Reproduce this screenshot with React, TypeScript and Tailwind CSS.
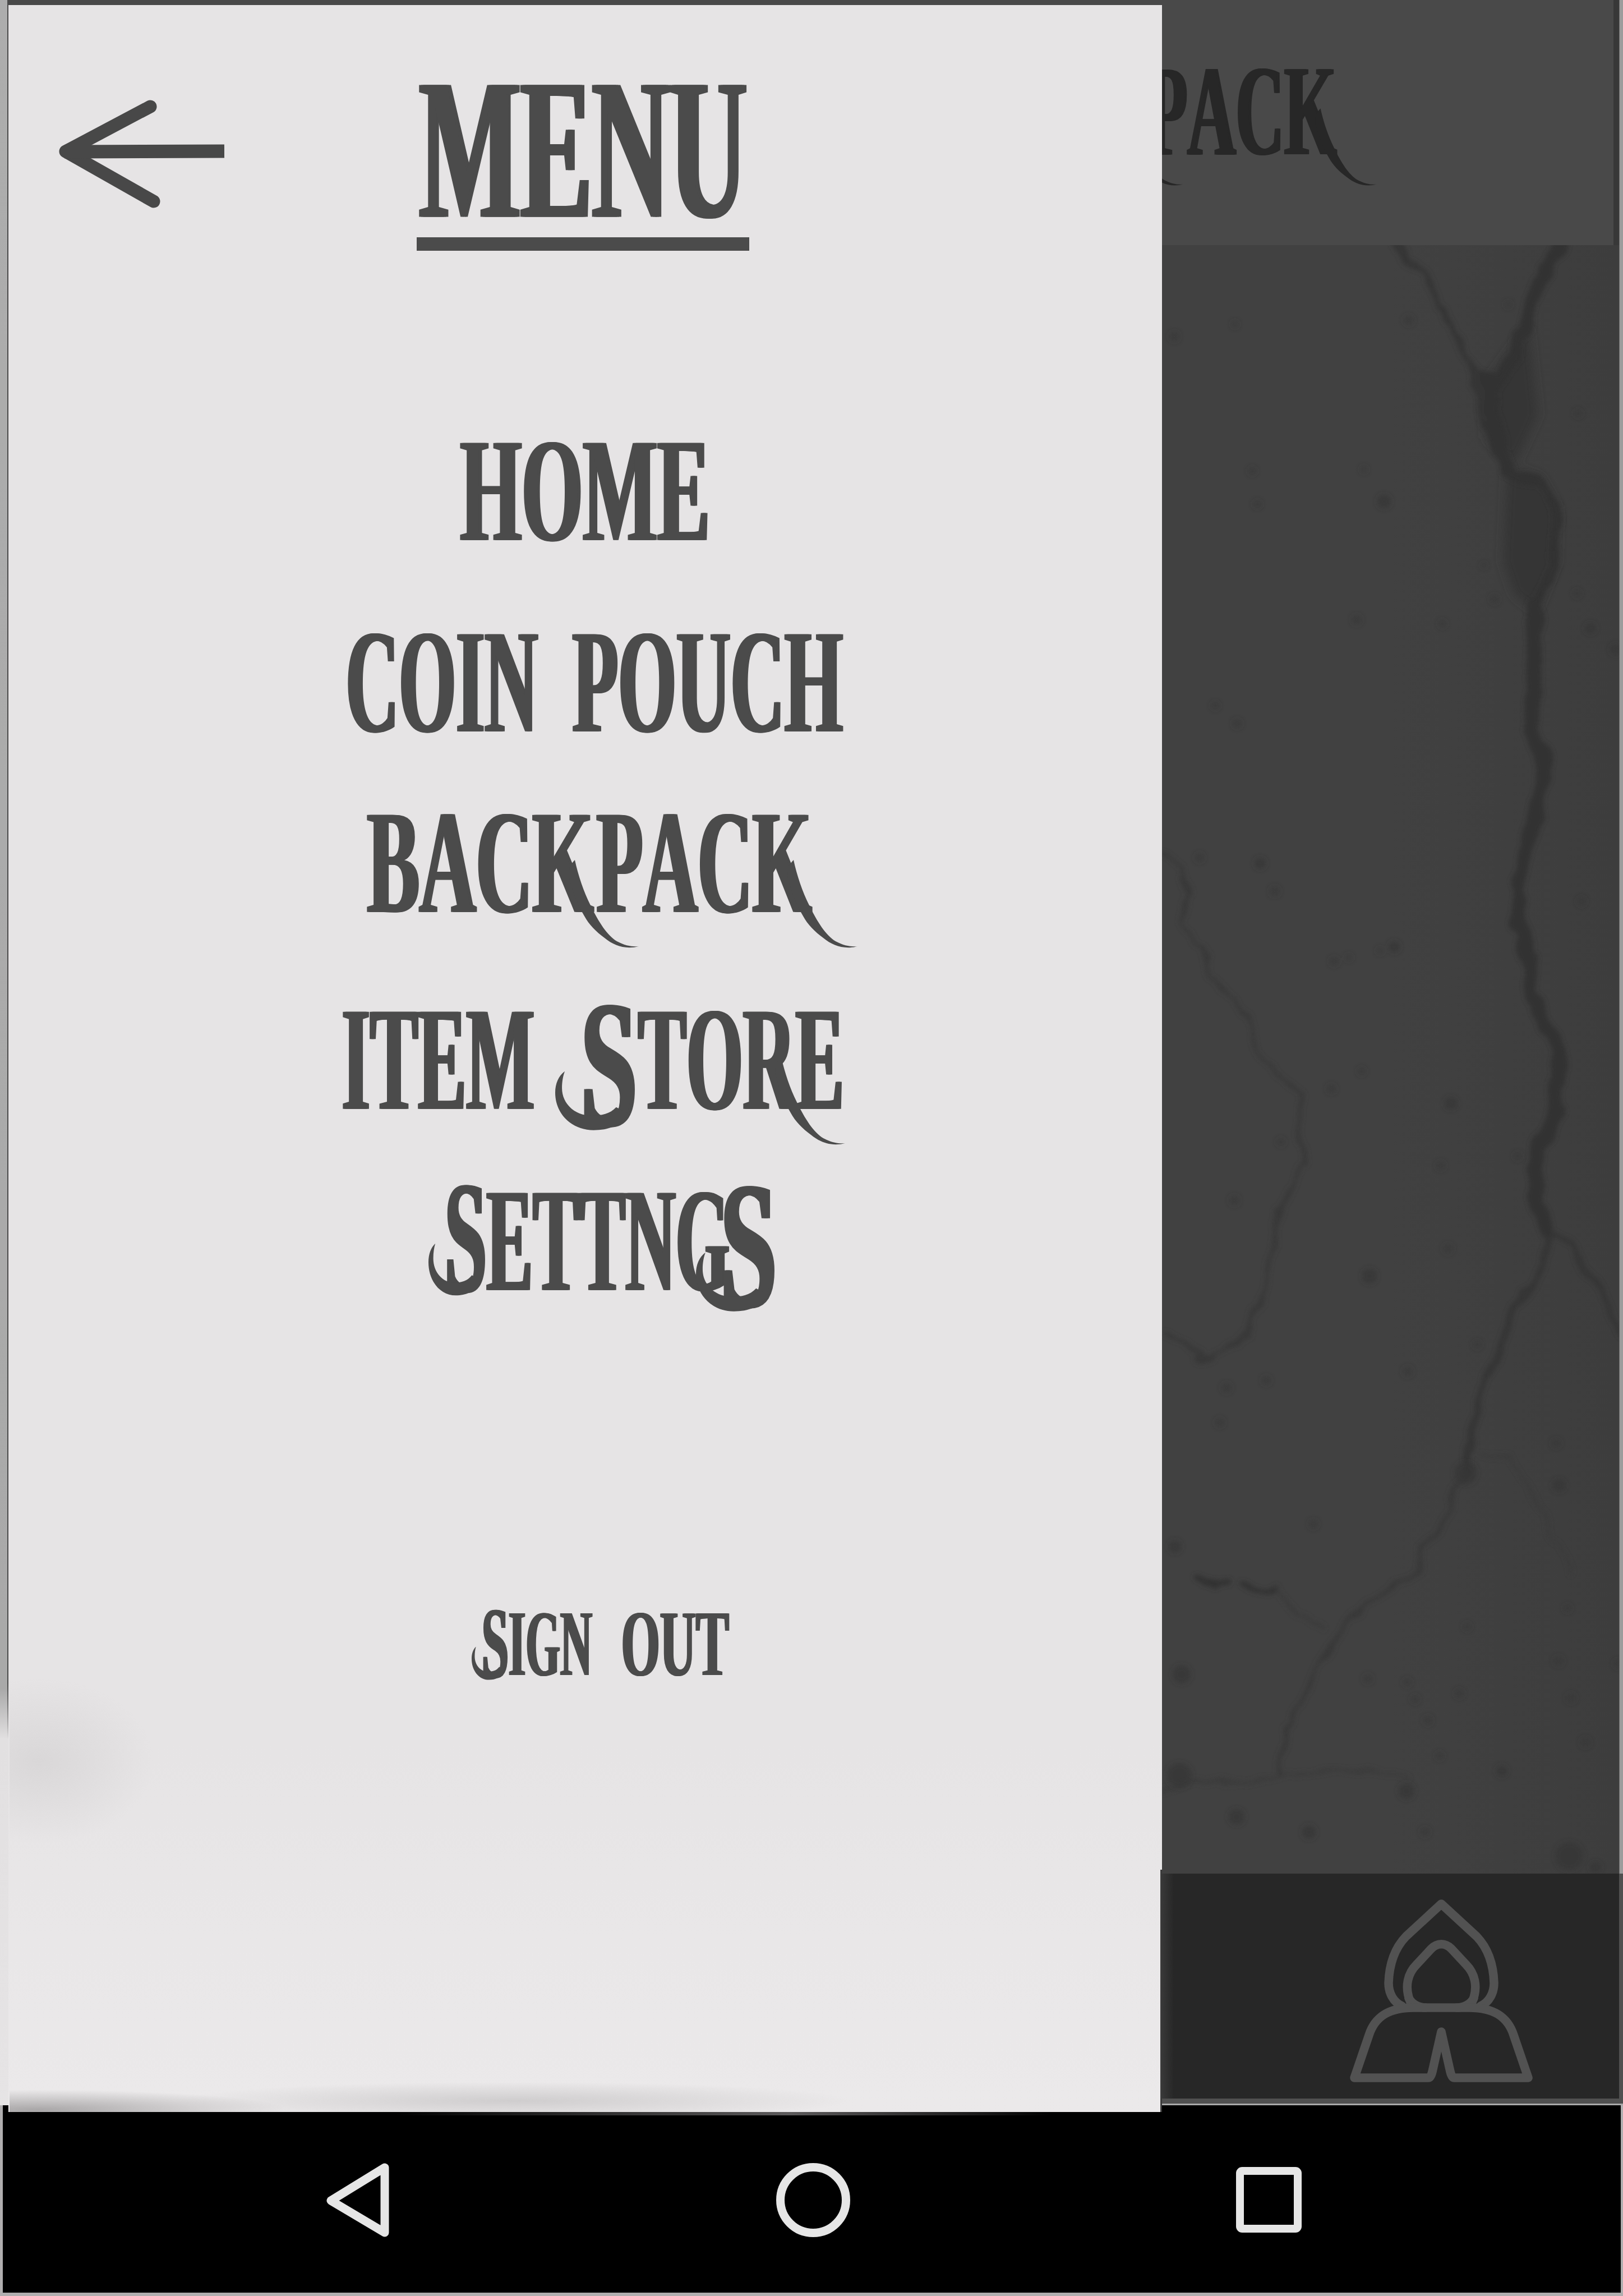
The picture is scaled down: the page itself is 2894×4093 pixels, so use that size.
import React from 'react';

// Advance widths of the bold serif capitals, in em.
const ADVANCE: Record<string, number> = {
  A: 0.722, B: 0.667, C: 0.722, E: 0.667, G: 0.778, H: 0.778, I: 0.389, K: 0.778, M: 0.944,
  N: 0.722, O: 0.778, P: 0.611, R: 0.722, S: 0.556, T: 0.667, U: 0.722,
};

const CAP = 0.655;

type Part = {
  text: string;
  width: number;
  cap: number;
  before?: number;
  drop?: number;
  // x offsets of the sweeping tails below K and R
  tails?: number[];
  // width of the crescent that curls out to the left of the part
  curl?: number;
};

function Tail({ x, cap }: { x: number; cap: number }) {
  const k = cap / 173;
  return (
    <svg
      className="absolute top-0 overflow-visible"
      style={{ left: x, width: 100 * k, height: 240 * k }}
      viewBox="0 0 100 240"
      fill="currentColor"
    >
      <path d="M-30 80C-24 108-14 137-2 161C12 190 28 215 45 225C60 233 72 235 84 234C60 240 40 233 23 219C8 208-5 195-13 180C-26 158-34 136-40 112C-43 98-38 88-30 80Z" />
    </svg>
  );
}

function Curl({ width, height, drop }: { width: number; height: number; drop: number }) {
  return (
    <svg
      className="absolute right-0 overflow-visible"
      style={{ width, height, top: drop }}
      viewBox="0 0 145 225"
      preserveAspectRatio="none"
      fill="currentColor"
    >
      <path d="M17 120C6 128 0 142 0 158C0 195 28 225 68 225C94 225 116 217 130 196L108 184C97 196 82 199 64 199C35 199 12 178 12 150C12 138 14 128 17 120Z" />
    </svg>
  );
}

function Lettering({ parts, className }: { parts: Part[]; className: string }) {
  return (
    <div className={'flex items-start whitespace-nowrap ' + className}>
      {parts.map((p, i) => {
        const size = p.cap / CAP;
        const natural = p.text.split('').reduce((sum, c) => sum + (ADVANCE[c] ?? 0.25), 0) * size;
        return (
          <span
            key={i}
            className="relative block shrink-0"
            style={{ width: p.width, height: p.cap, marginLeft: p.before ?? 0 }}
          >
            <span
              className="block w-max origin-top-left leading-none [font-kerning:none] [text-shadow:0.02em_0_currentColor,0.04em_0_currentColor]"
              style={{
                fontSize: size,
                transform: `translateY(${-0.1825 * size + (p.drop ?? 0)}px) scaleX(${p.width / (natural + 0.02 * size)})`,
              }}
            >
              {p.text}
            </span>
            {p.tails?.map((x) => <Tail key={x} x={x} cap={p.cap} />)}
            {p.curl && <Curl width={p.curl} height={p.cap * 1.055} drop={(p.drop ?? 0) - p.cap * 0.02} />}
          </span>
        );
      })}
    </div>
  );
}

const DOTS: [number, number, number][] = [
  [2094, 600, 9], [2202, 578, 6], [2233, 840, 7], [2242, 899, 7], [2468, 894, 12], [2512, 571, 9],
  [2432, 837, 6], [2419, 1105, 9], [2572, 1112, 7], [2665, 1068, 8], [2812, 1058, 7], [2836, 1120, 10],
  [2881, 1158, 10], [2167, 1258, 7], [2206, 1290, 8], [2814, 737, 7], [2689, 543, 6], [2646, 1008, 5],
  [2139, 1529, 8], [2247, 1539, 10], [2273, 1589, 9], [2820, 1607, 8], [2486, 1688, 10], [2461, 1695, 6],
  [2379, 1714, 8], [2405, 1707, 6], [2374, 1941, 8], [2428, 1910, 7], [2587, 1967, 11], [2569, 2078, 8],
  [2201, 2140, 9], [2284, 2036, 7], [2442, 2275, 13], [2582, 2226, 9], [2510, 2445, 9], [2258, 2461, 8],
  [2187, 2474, 9], [2634, 2397, 7], [2706, 2061, 7], [2175, 2536, 8], [2613, 2626, 20], [2780, 2648, 11],
  [2775, 2573, 8], [2095, 2757, 11], [2107, 2985, 16], [2342, 2717, 8], [2616, 2900, 7], [2439, 2993, 8],
  [2509, 2999, 7], [2523, 3029, 7], [2602, 3019, 8], [2546, 3067, 8], [2567, 3130, 7], [2678, 3157, 10],
  [2508, 3193, 14], [2779, 2961, 9], [2801, 3027, 9], [2827, 3106, 9], [2795, 2867, 7], [2103, 3165, 22],
  [2205, 3239, 14], [2334, 3266, 12], [2541, 3266, 8], [2798, 3309, 25], [2845, 3329, 10], [2885, 2966, 8],
];

function Wall() {
  return (
    <div className="h-[2903px] w-[815px] bg-[#414141]">
      <svg className="block h-full w-full" viewBox="2072 437 815 2903" fill="none" strokeLinecap="round" strokeLinejoin="round">
        <defs>
          <filter id="soft" x="-20%" y="-20%" width="140%" height="140%">
            <feTurbulence type="fractalNoise" baseFrequency="0.025" numOctaves="2" seed="4" result="noise" />
            <feDisplacementMap in="SourceGraphic" in2="noise" scale="22" xChannelSelector="R" yChannelSelector="G" />
            <feGaussianBlur stdDeviation="4" />
          </filter>
          <filter id="blur">
            <feGaussianBlur stdDeviation="4" />
          </filter>
          <filter id="wide" x="-50%" y="-20%" width="200%" height="140%">
            <feGaussianBlur stdDeviation="9" />
          </filter>
          <linearGradient id="shade" x1="0" x2="1" y1="0" y2="0">
            <stop offset="0.5" stopColor="#3d3d3d" stopOpacity="0" />
            <stop offset="1" stopColor="#3d3d3d" />
          </linearGradient>
        </defs>
        <rect x="2072" y="437" width="815" height="2903" fill="url(#shade)" />
        <g filter="url(#wide)" fill="#363636">
          <path d="M2688 830L2746 850L2778 905L2775 1005L2740 1090L2700 1060L2680 1000Z" />
          <path d="M2725 580L2742 740L2700 830L2650 780L2645 690Z" />
        </g>
        <g filter="url(#soft)">
          <path stroke="#313131" strokeWidth="24" d="M2790 425L2746 497L2725 564L2698 638L2661 696L2661 763L2688 837" />
          <path fill="#323232" d="M2632 655L2665 665L2680 760L2700 840L2672 830L2640 760Z" />
          <path stroke="#323232" strokeWidth="16" d="M2676 815L2700 845L2746 858L2772 895L2776 930L2770 1010L2741 1078" />
          <path stroke="#323232" strokeWidth="26" d="M2735 1085L2735 1160L2733 1268L2730 1300L2754 1360L2750 1390L2738 1453L2709 1560L2706 1637L2727 1700L2730 1760L2740 1800L2783 1870L2778 1930L2773 1988L2745 2045L2735 2088L2745 2150L2762 2203" />
          <path stroke="#343434" strokeWidth="13" d="M2765 2203L2735 2294L2706 2325L2670 2410L2640 2480L2637 2511L2618 2582L2613 2626" />
          <path stroke="#373737" strokeWidth="8" d="M2613 2626L2587 2670L2571 2725L2533 2763L2528 2802L2475 2835L2406 2884L2363 2944L2321 3032L2291 3076L2281 3169" />
          <path stroke="#353535" strokeWidth="12" d="M2485 433L2544 497L2581 572L2629 655L2645 746" />
          <path stroke="#353535" strokeWidth="11" d="M2770 2195L2795 2212L2831 2264L2863 2317L2892 2385" />
          <path stroke="#393939" strokeWidth="7" d="M2072 1519L2103 1545L2119 1591L2108 1652L2145 1690L2156 1736L2190 1775L2225 1805L2241 1874L2273 1912L2323 1950L2315 2011L2326 2065L2294 2126L2275 2190L2262 2264L2235 2350L2215 2385L2156 2421L2120 2400L2072 2376" />
          <path stroke="#383838" strokeWidth="11" d="M2323 2050L2328 2075M2107 1560L2119 1591M2280 2160L2276 2190M2225 2379L2190 2402M2140 2421L2165 2422" />
          <path stroke="#303030" strokeWidth="11" d="M2140 2813L2164 2829L2190 2821M2220 2826L2251 2837L2278 2833" />
          <path stroke="#3b3b3b" strokeWidth="7" d="M2278 2833L2315 2878L2358 2900M2640 2588L2688 2599L2720 2643L2746 2692L2778 2752L2805 2807M2072 3193L2134 3169L2209 3180L2353 3158L2430 3155L2507 3169" />
        </g>
        <g filter="url(#blur)">
          {DOTS.map(([x, y, r], i) => (
            <circle key={i} cx={x} cy={y} r={r} fill="#353535" opacity={r > 9 ? 0.75 : 0.6} />
          ))}
        </g>
      </svg>
    </div>
  );
}

function HoodIcon() {
  return (
    <svg
      className="h-[340px] w-[340px]"
      viewBox="2400 3380 340 340"
      fill="none"
      stroke="#525252"
      strokeWidth="15.500"
      strokeLinecap="round"
      strokeLinejoin="round"
    >
      <path d="M2500 3576C2484 3569 2476 3552 2476 3535C2477 3505 2485 3475 2507 3452L2570 3394L2633 3452C2655 3475 2663 3505 2664 3535C2664 3552 2656 3569 2640 3576" />
      <path d="M2516 3572C2502 3540 2512 3516 2526 3502L2552 3474C2563 3463 2577 3463 2588 3474L2614 3502C2628 3516 2638 3540 2624 3572" />
      <path d="M2512 3562C2518 3573 2530 3579 2542 3579M2628 3562C2622 3573 2610 3579 2598 3579" />
      <path d="M2520 3579H2620C2662 3579 2688 3594 2699 3628L2725 3704H2593C2589 3704 2587 3697 2586 3693L2570 3622L2554 3693C2553 3697 2551 3704 2547 3704H2415L2441 3628C2452 3594 2478 3579 2520 3579Z" />
    </svg>
  );
}

function Drawer() {
  return (
    <aside className="relative z-10 mt-[9px] h-[3756px] w-[2057px] shrink-0 overflow-hidden border-l-2 border-transparent bg-[linear-gradient(#e6e4e5_0,#e6e4e5_3100px,#e9e7e8_3450px,#ebe9ea_3756px)] text-[#4b4b4b]">
      <div className="absolute top-[2980px] left-0 h-[300px] w-[260px] bg-[radial-gradient(ellipse_at_20%_50%,#d9d7d8_0%,transparent_70%)]" />
      <div className="absolute bottom-0 left-0 h-[52px] w-[1600px] bg-[radial-gradient(ellipse_600px_34px_at_900px_32px,#cfcdce_0%,transparent_100%)]" />
      <div className="absolute bottom-0 left-0 h-[40px] w-[500px] bg-[radial-gradient(ellipse_at_10%_90%,#a9a7a8_0%,transparent_70%)]" />
      <div className="absolute right-0 bottom-0 h-[432px] w-[3px] bg-[#3a3a3a]" />
      <div className="relative flex h-[438px]">
        <svg className="mt-[151px] ml-[78px] h-[220px] w-[320px]" viewBox="95 160 320 220" stroke="#484848" strokeWidth="23" strokeLinejoin="round" fill="none">
          <path strokeLinecap="round" d="M268 190L117 270L274 359" />
          <path d="M115 270.500L400 269.500" strokeWidth="24" />
        </svg>
        <div className="mt-[143px] ml-[328px] w-[593px]">
          <Lettering className="pl-[1px]" parts={[{ text: 'MENU', width: 588, cap: 235 }]} />
          <div className="mt-[36px] h-[24px] w-full bg-[#4b4b4b]" />
        </div>
      </div>
      <nav className="relative flex flex-col">
        <Lettering className="mt-[343px] ml-[801px]" parts={[{ text: 'HOME', width: 448, cap: 173 }]} />
        <Lettering
          className="mt-[168px] ml-[597px]"
          parts={[
            { text: 'COIN', width: 345, cap: 173 },
            { text: 'POUCH', width: 485, cap: 173, before: 59 },
          ]}
        />
        <Lettering
          className="mt-[149px] ml-[635px]"
          parts={[
            { text: 'BACK', width: 406, cap: 173, tails: [403] },
            { text: 'PACK', width: 386, cap: 173, before: 3, tails: [384] },
          ]}
        />
        <Lettering
          className="mt-[178px] ml-[590px]"
          parts={[
            { text: 'ITEM', width: 346, cap: 173 },
            { text: 'S', width: 104, cap: 213, before: 79, drop: -10, curl: 146 },
            { text: 'TORE', width: 370, cap: 173, before: -1, tails: [288] },
          ]}
        />
        <Lettering
          className="mt-[110px] ml-[773px]"
          parts={[
            { text: 'S', width: 78, cap: 188, drop: -12, curl: 104 },
            { text: 'ETTNG', width: 436, cap: 173, before: -3 },
            { text: 'S', width: 104, cap: 213, before: -20, drop: -10, curl: 144 },
          ]}
        />
        <Lettering
          className="mt-[537px] ml-[840px]"
          parts={[
            { text: 'S', width: 50, cap: 120, drop: -7, curl: 66 },
            { text: 'IGN', width: 151, cap: 110, before: -2 },
            { text: 'OUT', width: 194, cap: 110, before: 50 },
          ]}
        />
      </nav>
    </aside>
  );
}

export default function App() {
  return (
    <div className="flex h-[4093px] w-[2894px] flex-col overflow-hidden bg-[#b0aeaf] font-['Liberation_Serif',serif] font-bold">
      <div className="flex h-[3753px] shrink-0 bg-[linear-gradient(to_right,transparent_15px,#494949_15px,#494949_2072px,transparent_2072px)]">
        <div className="h-full w-[15px] shrink-0 bg-[linear-gradient(#adadad_0,#a9a9a9_3010px,#e2e0e1_3100px,#e6e4e5_100%)]">
          <div className="ml-[13px] h-[3100px] w-[2px] bg-[linear-gradient(#4a4a4a_3000px,transparent)]" />
        </div>
        <Drawer />
        <main className="flex w-[822px] flex-col bg-[linear-gradient(to_right,#383838_815px,#9c9c9c_816px)]">
          <header className="h-[437px] w-[805px] overflow-hidden bg-[#494949] text-[#272727]">
            <Lettering
              className="mt-[123px] -ml-[390px]"
              parts={[
                { text: 'BACK', width: 357, cap: 152, tails: [354] },
                { text: 'PACK', width: 341, cap: 152, before: 3, tails: [339] },
              ]}
            />
          </header>
          <Wall />
          <div className="-ml-[3px] flex h-[401px] w-[825px] justify-end bg-[linear-gradient(to_right,#3a3a3a_0,#272727_24px,#272727_818px,#505050_818px)] pt-[40px] pr-[154px]">
            <HoodIcon />
          </div>
          <div className="h-[9px] bg-[#505050]" />
          <div className="h-[3px] bg-[#a8a8a8]" />
        </main>
      </div>
      <footer className="relative mr-[4px] ml-[5px] h-[334px] shrink-0 bg-black">
        <svg className="absolute top-[103px] left-[576px] h-[132px] w-[113px]" viewBox="581 3856 113 132" fill="none" stroke="#e6e6e6" strokeWidth="15" strokeLinejoin="round">
          <path d="M590 3923L686 3864V3980Z" />
        </svg>
        <div className="absolute top-[103px] left-[1379px] h-[132px] w-[132px] rounded-full border-[15px] border-[#e6e6e6]" />
        <div className="absolute top-[110px] left-[2199px] h-[117px] w-[117px] rounded-[11px] border-[14px] border-[#e6e6e6]" />
        <div className="absolute top-[12px] left-[700px] h-[6px] w-[1170px] bg-[linear-gradient(to_right,transparent,#5c5a5b_60%,transparent)]" />
      </footer>
    </div>
  );
}
